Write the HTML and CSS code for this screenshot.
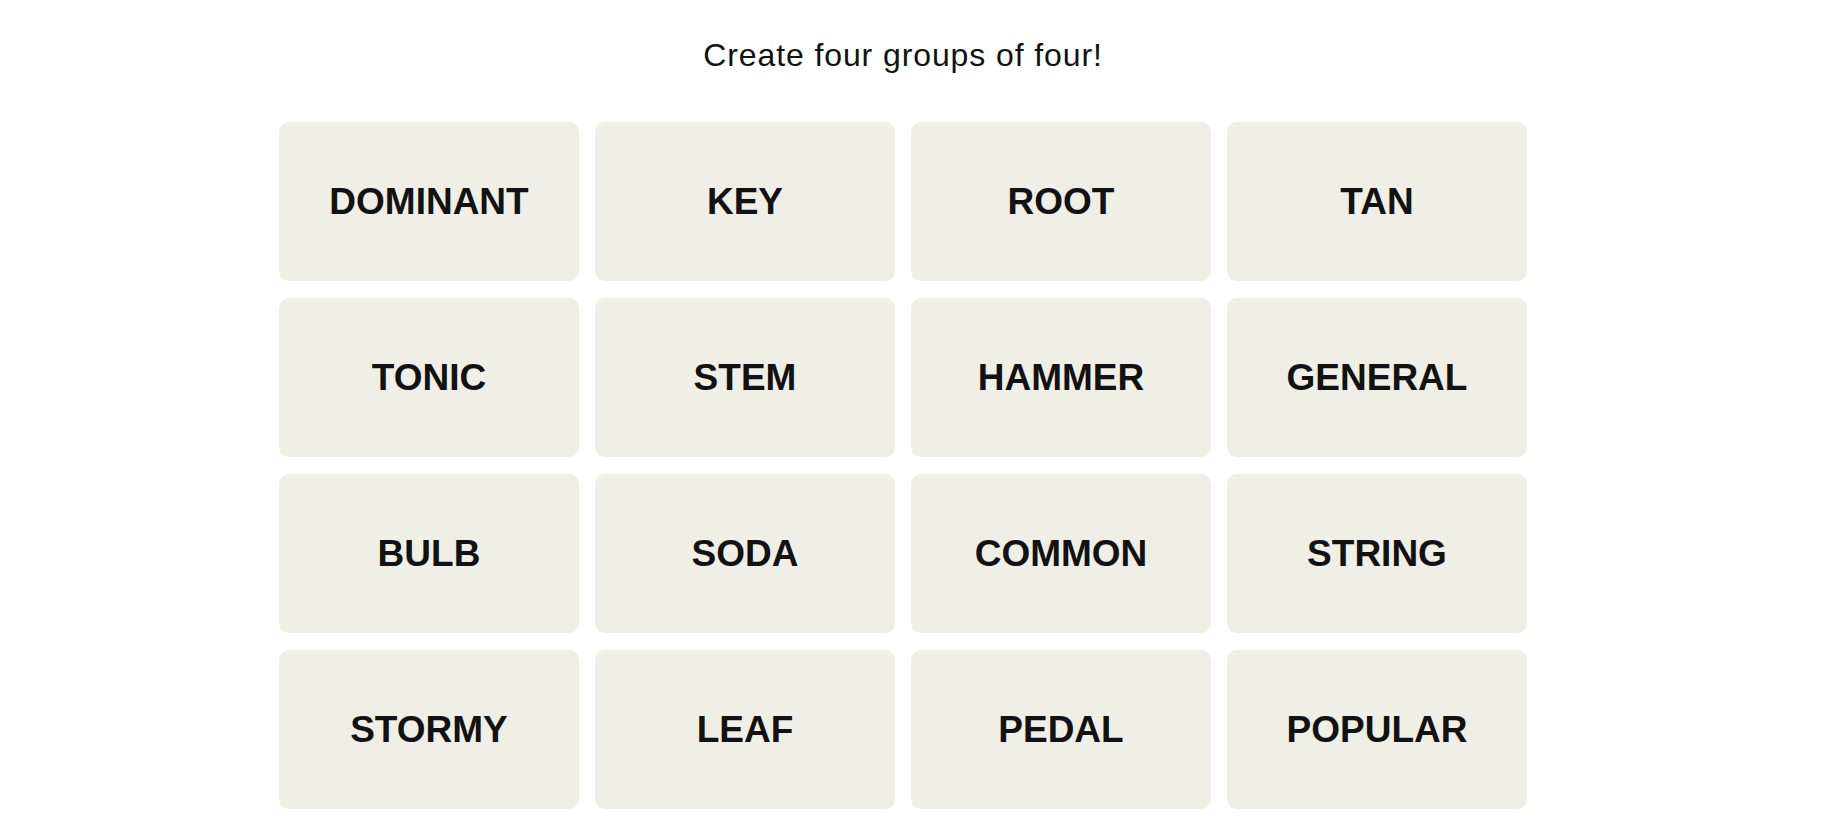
FILE: index.html
```html
<!DOCTYPE html>
<html lang="en">
<head>
<meta charset="utf-8">
<title>Connections</title>
<link rel="stylesheet" href="styles.css">
</head>
<body>
<main class="page">
  <p class="prompt">Create four groups of four!</p>
  <section class="board">
    <button class="tile">DOMINANT</button>
    <button class="tile">KEY</button>
    <button class="tile">ROOT</button>
    <button class="tile">TAN</button>
    <button class="tile">TONIC</button>
    <button class="tile">STEM</button>
    <button class="tile">HAMMER</button>
    <button class="tile">GENERAL</button>
    <button class="tile">BULB</button>
    <button class="tile">SODA</button>
    <button class="tile">COMMON</button>
    <button class="tile">STRING</button>
    <button class="tile">STORMY</button>
    <button class="tile">LEAF</button>
    <button class="tile">PEDAL</button>
    <button class="tile">POPULAR</button>
  </section>
</main>
</body>
</html>
```
FILE: styles.css
```css
html, body {
  margin: 0;
  padding: 0;
  background: #ffffff;
}

body {
  font-family: "Liberation Sans", Arial, sans-serif;
  color: #121212;
}

.page {
  width: calc(100% - 18px);
  display: flex;
  flex-direction: column;
  align-items: center;
  padding-top: 35px;
}

.prompt {
  margin: 0;
  font-size: 32px;
  line-height: 40px;
  letter-spacing: 0.9px;
  font-weight: 400;
  color: #121212;
}

.board {
  margin-top: 47px;
  display: grid;
  grid-template-columns: repeat(4, 300px);
  grid-auto-rows: 159px;
  gap: 17px 16px;
}

.tile {
  border: none;
  margin: 0;
  padding: 1px 0 0;
  background: #efefe6;
  border-radius: 10px;
  font-family: "Liberation Sans", Arial, sans-serif;
  font-weight: 700;
  font-size: 37px;
  color: #121212;
  display: flex;
  align-items: center;
  justify-content: center;
  cursor: pointer;
}
```
